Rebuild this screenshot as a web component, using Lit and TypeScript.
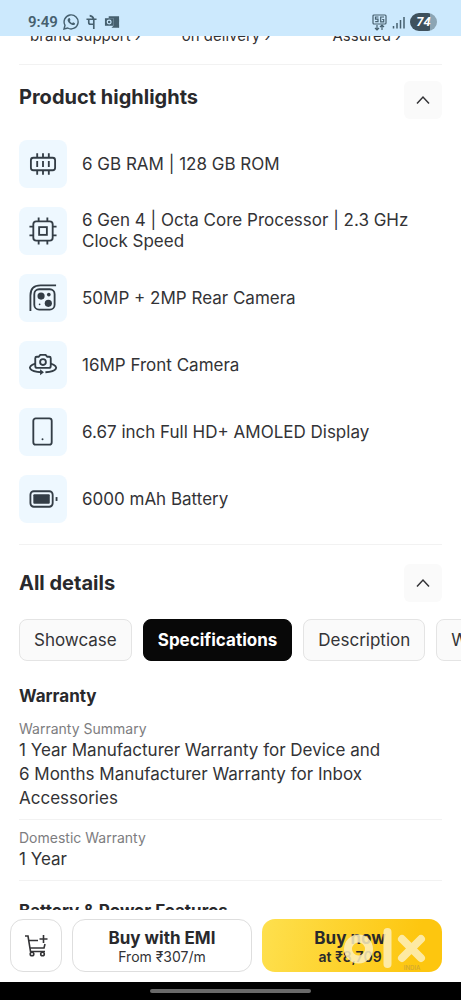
import { LitElement, html, css, svg } from 'lit';
import { customElement, state } from 'lit/decorators.js';
import { classMap } from 'lit/directives/class-map.js';

const icons = {
  ram: svg`<rect x="3" y="9" width="25" height="13" rx="2.500"/><path d="M9.500 4.500v4.500M15.500 4.500v4.500M21.500 4.500v4.500M9.500 22v4.500M15.500 22v4.500M21.500 22v4.500M9.500 12.500v6M15.500 12.500v6M21.500 12.500v6"/>`,
  cpu: svg`<rect x="5.500" y="5.500" width="20" height="20" rx="3"/><rect x="11.500" y="11.500" width="8" height="8"/><path d="M11 1.500v4M20 1.500v4M11 25.500v4M20 25.500v4M1.500 11h4M1.500 20h4M25.500 11h4M25.500 20h4"/>`,
  rear: svg`<path d="M2.500 29V13Q2.500 2.500 13 2.500H29"/><rect x="6.500" y="6.500" width="21" height="21" rx="5"/><g class="solid"><circle cx="13.500" cy="13.500" r="3.700"/><circle cx="21" cy="21" r="3.700"/><circle cx="21.500" cy="12" r="1.900"/><circle cx="12" cy="22" r=".9"/></g>`,
  front: svg`<path d="M7.500 16.500V8.500q0-1.500 1.500-1.500h2l1.700-2h5.500l1.700 2h2.100q1.500 0 1.500 1.500V16.500q0 2-2 2h-12q-2 0-2-2z"/><circle cx="15.500" cy="12.500" r="3"/><path d="M7.500 14C-2 17 1 22.500 14 23M23.500 14c9.500 3 6.500 8.500-5.500 9"/><path class="solid" d="M12.500 20l4 3-4 3z"/>`,
  phone: svg`<rect x="5.500" y="1.500" width="19" height="27" rx="2.500"/><circle class="solid" cx="15" cy="23" r="1"/>`,
  battery: svg`<rect x="2.500" y="7.500" width="23" height="16" rx="3.500"/><rect class="solid" x="5.500" y="10.500" width="17" height="10" rx="1"/><path d="M29.500 13.500v4"/>`,
};

const highlights = [
  { icon: icons.ram, text: '6 GB RAM | 128 GB ROM' },
  { icon: icons.cpu, text: '6 Gen 4 | Octa Core Processor | 2.3 GHz Clock Speed' },
  { icon: icons.rear, text: '50MP + 2MP Rear Camera' },
  { icon: icons.front, text: '16MP Front Camera' },
  { icon: icons.phone, text: '6.67 inch Full HD+ AMOLED Display' },
  { icon: icons.battery, text: '6000 mAh Battery' },
];

const tabs = ['Showcase', 'Specifications', 'Description', 'Warranty'];

@customElement('app-root')
export class AppRoot extends LitElement {
  @state() private tab = 'Specifications';
  @state() private highlightsOpen = true;
  @state() private detailsOpen = true;

  static styles = css`
    :host {
      display: flex;
      flex-direction: column;
      height: 100vh;
      overflow: hidden;
      background: #fff;
      color: #333336;
      font-family: Inter, Roboto, sans-serif;
      font-size: 16px;
      font-weight: 400;
    }
    *, *::before, *::after { box-sizing: border-box; }
    button { font: inherit; color: inherit; margin: 0; cursor: pointer; }
    h2, h3, p, ul, dl, dd { margin: 0; padding: 0; }
    h2, h3, strong { color: #29292c; }
    svg { display: block; fill: none; stroke: currentColor; }
    .solid { fill: currentColor; stroke: none; }

    .status {
      flex: none;
      display: flex;
      align-items: center;
      height: 36px;
      padding: 8px 24px 0 28px;
      background: #cce9fd;
      color: #46606f;
      font-family: Roboto, sans-serif;
    }
    .clock { font-size: 15px; line-height: 18px; font-weight: 600; margin-right: 5px; }
    .apps, .signals { display: flex; align-items: center; gap: 7px; }
    .signals { margin-left: auto; gap: 5px; }
    .pill {
      width: 27px;
      height: 18px;
      border-radius: 9px;
      background: linear-gradient(90deg, #3e515d 74%, #8ca5b4 74%);
      color: #fff;
      font-size: 13px;
      font-weight: 700;
      font-style: italic;
      line-height: 18px;
      text-align: center;
    }
    .lens { stroke: #cce9fd; stroke-width: 1.3px; }

    .page { flex: 1; min-height: 0; overflow: hidden; padding: 0 19px; }
    .content { margin-top: -10px; }
    .perks {
      display: grid;
      grid-template-columns: repeat(3, 1fr);
      margin: 0 5px 0 -4px;
      padding-bottom: 18px;
      font-size: 15px;
      line-height: 20px;
      text-align: center;
    }
    .perks a { color: inherit; text-decoration: none; }
    .section { border-top: 1px solid #f2f2f2; }
    .head {
      display: flex;
      align-items: flex-start;
      justify-content: space-between;
      padding-top: 16px;
    }
    .details .head { align-items: center; padding-top: 19px; }
    h2 { font-size: 20px; line-height: 32px; font-weight: 700; }
    .toggle {
      display: grid;
      place-items: center;
      width: 38px;
      height: 38px;
      padding: 0;
      border: 0;
      border-radius: 6px;
      background: #fafafa;
    }
    .closed svg { transform: rotate(180deg); }
    .highlights {
      display: flex;
      flex-direction: column;
      gap: 19px;
      padding: 21px 0;
      list-style: none;
    }
    .highlights li { display: flex; align-items: center; gap: 15px; font-size: 17px; line-height: 21px; }
    .tile {
      flex: none;
      display: grid;
      place-items: center;
      width: 48px;
      height: 48px;
      border-radius: 8px;
      background: #eef8ff;
      color: #333d46;
    }

    .tabs { display: flex; gap: 11px; margin: 17px -19px 5px 0; overflow: hidden; }
    .tab {
      flex: none;
      height: 42px;
      padding: 0 14px;
      border: 1px solid #e4e4e4;
      border-radius: 8px;
      background: #fafafa;
      font-size: 17px;
    }
    .tab.active { background: #080808; border-color: #080808; color: #fff; font-weight: 700; }
    h3 { font-size: 17px; line-height: 24px; font-weight: 700; padding-top: 18px; }
    dl { padding-top: 3px; }
    .spec { padding: 9px 0; border-bottom: 1px solid #f2f2f2; }
    dt { font-size: 14px; line-height: 18px; color: #7d7d80; }
    dd { max-width: 370px; font-size: 17px; line-height: 24px; }

    .actions { flex: none; display: flex; gap: 10px; padding: 9px 19px 10px 10px; background: #fff; }
    .cart, .cta {
      height: 53px;
      padding: 0;
      border: 1px solid #dedede;
      border-radius: 13px;
      background: #fff;
    }
    .cart { flex: none; display: grid; place-items: center; width: 52px; }
    .cta { flex: 1 1 0; position: relative; padding-top: 2px; font-size: 14px; line-height: 18px; }
    .cta strong { display: block; font-size: 17px; line-height: 20px; font-weight: 700; }
    .buy { border-color: transparent; background: linear-gradient(100deg, #fee04e, #fdc60f 85%) border-box; color: #29292c; font-weight: 600; }
    .buy .label { display: block; padding-right: 4px; }
    .mark {
      position: absolute;
      right: 13px;
      top: 6px;
      stroke: #fdf0bd;
      stroke-width: 8px;
      stroke-linecap: round;
      opacity: .85;
    }
    .tag { fill: #c9a23a; stroke: none; font-size: 6px; font-weight: 500; }
    .gesture { flex: none; display: grid; place-items: center; height: 18px; background: #000; }
    .gesture span { width: 35%; height: 4px; border-radius: 2px; background: #696969; }
  `;

  private chevron(open: boolean, label: string, toggle: () => void) {
    return html`<button class=${classMap({ toggle: true, closed: !open })} aria-label=${label} aria-expanded=${open} @click=${toggle}>
      <svg width="16" height="10" viewBox="0 0 16 10" stroke-width="1.500"><path d="M2 8.500 8 2l6 6.500"/></svg>
    </button>`;
  }

  render() {
    return html`
      <header class="status">
        <span class="clock">9:49</span>
        <div class="apps">
          <svg width="16" height="16" viewBox="0 0 16 16" stroke-width="1.400"><path d="M1 15l1-3.700A7 7 0 1 1 4.700 14z"/><path class="solid" d="M5.500 4.200 6.700 4l.8 2-.7 1c.5 1 1.200 1.700 2.300 2.200l1-.9 1.900 1-.2 1.200c-2 2-7.500-2-7.200-4.800z"/></svg>
          <svg width="11" height="16" viewBox="0 0 12 16" stroke-width="1.800"><path d="M.5 5h11M8.500 5V15.500M3 5v3.500q0 2 2 2h3.500M4 1q3.500.5 4.500 4"/></svg>
          <svg width="16" height="14" viewBox="0 0 17 14"><path class="solid" d="M5 1h11v6l-2 1 2 2v3H8l2-2V3H5z"/><rect class="solid" x="1" y="3" width="9" height="8"/><path class="solid" d="M10 8l6-4v9z"/><circle class="lens" cx="5.500" cy="7" r="2"/></svg>
        </div>
        <div class="signals">
          <svg width="15" height="17" viewBox="0 0 15 17" stroke-width="1.200"><rect x="1" y="1" width="13" height="9" rx="1"/><path d="M6.500 3H3.500v2.200h2.500v2.500H3.200M12 3H8.700v4.800h3V5.500h-1.500M5 11v5M3 14l2 2 2-2M10 16v-5M8 13l2-2 2 2"/></svg>
          <svg width="13" height="13" viewBox="0 0 13 13" stroke-width="1.500"><path d="M1.500 10v2.500M5 7v5.500M8.500 4v8.500M12 1v11.500"/></svg>
          <span class="pill">74</span>
        </div>
      </header>

      <main class="page">
        <div class="content">
          <nav class="perks">
            <a href="#">brand support ›</a>
            <a href="#">on delivery ›</a>
            <a href="#">Assured ›</a>
          </nav>

          <section class="section">
            <div class="head">
              <h2>Product highlights</h2>
              ${this.chevron(this.highlightsOpen, 'Product highlights', () => (this.highlightsOpen = !this.highlightsOpen))}
            </div>
            ${this.highlightsOpen
              ? html`<ul class="highlights">
                  ${highlights.map((h) => html`<li>
                    <span class="tile"><svg width="30" height="30" viewBox="0 0 31 31" stroke-width="1.900">${h.icon}</svg></span>
                    <span>${h.text}</span>
                  </li>`)}
                </ul>`
              : ''}
          </section>

          <section class="section details">
            <div class="head">
              <h2>All details</h2>
              ${this.chevron(this.detailsOpen, 'All details', () => (this.detailsOpen = !this.detailsOpen))}
            </div>
            ${this.detailsOpen
              ? html`<div class="tabs">
                    ${tabs.map((t) => html`<button class=${classMap({ tab: true, active: t === this.tab })} @click=${() => (this.tab = t)}>${t}</button>`)}
                  </div>
                  <h3>Warranty</h3>
                  <dl>
                    <div class="spec"><dt>Warranty Summary</dt><dd>1 Year Manufacturer Warranty for Device and 6 Months Manufacturer Warranty for Inbox Accessories</dd></div>
                    <div class="spec"><dt>Domestic Warranty</dt><dd>1 Year</dd></div>
                  </dl>
                  <h3>Battery &amp; Power Features</h3>`
              : ''}
          </section>
        </div>
      </main>

      <footer class="actions">
        <button class="cart" aria-label="Add to cart">
          <svg width="24" height="24" viewBox="0 0 24 24" stroke-width="1.600"><path d="M1 2h3l2.500 15.500H21M4.800 6.500H14M6 14h14l1-4M19.500 1v8M15.500 5h8"/><circle cx="8" cy="20" r="1.800"/><circle cx="18.500" cy="20" r="1.800"/></svg>
        </button>
        <button class="cta"><strong>Buy with EMI</strong>From ₹307/m</button>
        <button class="cta buy">
          <span class="label"><strong>Buy now</strong>at ₹8,709</span>
          <svg class="mark" width="84" height="46" viewBox="0 0 84 46" aria-hidden="true">
            <circle cx="14.500" cy="23" r="10.500"/><path d="M43.500 6v32"/><path d="M58 13l19 19M77 13L58 32"/>
            <text class="tag" x="68" y="44" text-anchor="middle">INDIA</text>
          </svg>
        </button>
      </footer>
      <div class="gesture"><span></span></div>
    `;
  }
}
